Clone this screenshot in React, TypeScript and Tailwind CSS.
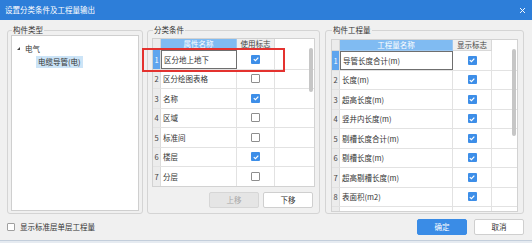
import React from 'react';

const cjk = "font-['Noto_Sans_CJK_SC','Microsoft_YaHei',sans-serif]";

const condRows = [
  { name: '区分地上地下', on: true },
  { name: '区分绘图表格', on: false },
  { name: '名称', on: true },
  { name: '区域', on: false },
  { name: '标准间', on: false },
  { name: '楼层', on: true },
  { name: '分层', on: false },
];

// last row is only partly in view, so no label is drawn for it
const qtyRows = [
  '导管长度合计(m)',
  '长度(m)',
  '超高长度(m)',
  '竖井内长度(m)',
  '剔槽长度合计(m)',
  '剔槽长度(m)',
  '超高剔槽长度(m)',
  '表面积(m2)',
  '',
].map((name) => ({ name, on: true }));

const Check = ({ on }: { on: boolean }) =>
  on ? (
    <span className="flex h-[9px] w-[9px] items-center justify-center rounded-[1px] bg-[#3d8ee8]">
      <svg viewBox="0 0 10 10" className="h-[8px] w-[8px]">
        <path d="M2.2 5.2 L4.3 7.1 L7.9 3.2" fill="none" stroke="#fff" strokeWidth="1.5" />
      </svg>
    </span>
  ) : (
    <span className="block h-[9px] w-[9px] rounded-[1px] border border-[#8e8e8e] bg-white" />
  );

type GridProps = {
  head: [string, string];
  rows: { name: string; on: boolean }[];
  nameW: string;
  checkW: string;
  box: string;
  thumb: string;
};

const Grid = ({ head, rows, nameW, checkW, box, thumb }: GridProps) => (
  <div className={`relative overflow-hidden border border-[#d2d2d2] bg-white ${box}`}>
    {/* header */}
    <div className="flex h-[11px] text-[7.5px] leading-[10px]">
      <div className="w-[8px] shrink-0 border-r border-b border-[#d8d8d8] bg-[#ececec]" />
      <div className={`${nameW} shrink-0 border-r border-b border-[#9cc8f2] bg-[#80bbf2] text-center text-white`}>
        {head[0]}
      </div>
      <div className={`${checkW} shrink-0 border-r border-b border-[#d8d8d8] bg-[#efefef] text-center text-[#444]`}>
        {head[1]}
      </div>
      <div className="flex-1" />
    </div>
    {rows.map((r, i) => (
      <div key={i} className="flex h-[19.5px] border-b border-[#e2e2e2] text-[7.5px] text-[#333]">
        <div
          className={`flex w-[8px] shrink-0 items-center justify-center border-r border-[#dcdcdc] ${
            i === 0 ? 'bg-[#5fa5ee] text-white' : 'bg-[#ececec] text-[#444]'
          }`}
        >
          {r.name ? i + 1 : ''}
        </div>
        <div
          className={`flex ${nameW} shrink-0 items-center pl-[2px] ${
            i === 0 ? 'border border-[#6f6f6f]' : 'border-r border-[#e2e2e2]'
          }`}
        >
          {r.name}
        </div>
        <div className={`flex ${checkW} shrink-0 items-center justify-center border-r border-[#e2e2e2]`}>
          <Check on={r.on} />
        </div>
        <div className="flex-1" />
      </div>
    ))}
    <div className={`absolute w-[4px] rounded-[2px] bg-[#c6c6c6] ${thumb}`} />
  </div>
);

const Btn = ({ label, kind }: { label: string; kind: 'off' | 'plain' | 'main' }) => {
  const look =
    kind === 'main'
      ? 'bg-[#3a8ce6] border-[#3a8ce6] text-white'
      : kind === 'off'
      ? 'bg-[#e5e5e5] border-[#d6d6d6] text-[#a8a8a8]'
      : 'bg-white border-[#cfcfcf] text-[#333]';
  return (
    <button className={`flex h-[16px] w-[50px] items-center justify-center rounded-[2px] border text-[7.5px] ${look}`}>
      {label}
    </button>
  );
};

const Group = ({ title, className, children }: { title: string; className: string; children: React.ReactNode }) => (
  <fieldset className={`h-[189px] shrink-0 rounded-[3px] border border-[#d4d4d4] ${className}`}>
    <legend className="ml-[1px] px-[1px] text-[7.5px] leading-[10px] text-[#333]">{title}</legend>
    {children}
  </fieldset>
);

export default function App() {
  return (
    <div className={`relative h-[243px] w-[532px] bg-[#e6ebf1] ${cjk}`}>
      <div className="flex h-[241px] flex-col border-b border-[#c3cedb] bg-[#f0f0f0]">
        {/* title bar */}
        <div className="flex h-[20px] shrink-0 items-center justify-between bg-[#2d7ed9] pl-[5px] pr-[6px] text-white">
          <span className="text-[7.5px]">设置分类条件及工程量输出</span>
          <svg viewBox="0 0 10 10" className="h-[7px] w-[7px]">
            <path d="M1.5 1.5 L8.5 8.5 M8.5 1.5 L1.5 8.5" stroke="#fff" strokeWidth="1.4" />
          </svg>
        </div>

        {/* groups */}
        <div className="flex gap-[4px] pl-[7px] pt-[5px]">
          <Group title="构件类型" className="w-[136px] px-[3px]">
            <div className="h-[176px] border border-[#cfcfcf] bg-white pt-[6px] text-[7.5px] text-[#333]">
              <div className="flex h-[13px] items-center">
                <svg viewBox="0 0 4 4" className="ml-[5px] h-[3px] w-[3px]">
                  <path d="M4 0 L4 4 L0 4 Z" fill="#444" />
                </svg>
                <span className="ml-[5px]">电气</span>
              </div>
              <div className="mt-[1px] flex h-[12px] items-center">
                <span className="ml-[24px] flex h-[12px] items-center bg-[#cce4f7] px-[2px]">电缆导管(电)</span>
              </div>
            </div>
          </Group>

          <Group title="分类条件" className="w-[173px] px-[4px]">
            <Grid
              head={['属性名称', '使用标志']}
              rows={condRows}
              nameW="w-[76px]"
              checkW="w-[38px]"
              box="mt-[3px] h-[149px]"
              thumb="right-[1px] top-[9px] h-[44px]"
            />
            <div className="mt-[5px] flex justify-end gap-[4px] pr-[2px]">
              <Btn label="上移" kind="off" />
              <Btn label="下移" kind="plain" />
            </div>
          </Group>

          <Group title="构件工程量" className="ml-[1px] w-[199px] px-[5px]">
            <Grid
              head={['工程量名称', '显示标志']}
              rows={qtyRows}
              nameW="w-[113px]"
              checkW="w-[39px]"
              box="mt-[4px] h-[173px]"
              thumb="right-[1px] top-[9px] h-[87px]"
            />
          </Group>
        </div>

        {/* bottom bar */}
        <div className="mt-[5px] flex items-center justify-between pl-[7px] pr-[8px]">
          <label className="flex items-center gap-[5px] text-[7.5px] text-[#333]">
            <span className="block h-[8px] w-[8px] rounded-[1px] border border-[#a0a0a0] bg-white" />
            显示标准层单层工程量
          </label>
          <div className="flex gap-[7px]">
            <Btn label="确定" kind="main" />
            <Btn label="取消" kind="plain" />
          </div>
        </div>
      </div>

      {/* red annotation box */}
      <div className="absolute left-[142px] top-[48px] h-[24px] w-[143px] border-2 border-[#e4322f]" />
    </div>
  );
}
